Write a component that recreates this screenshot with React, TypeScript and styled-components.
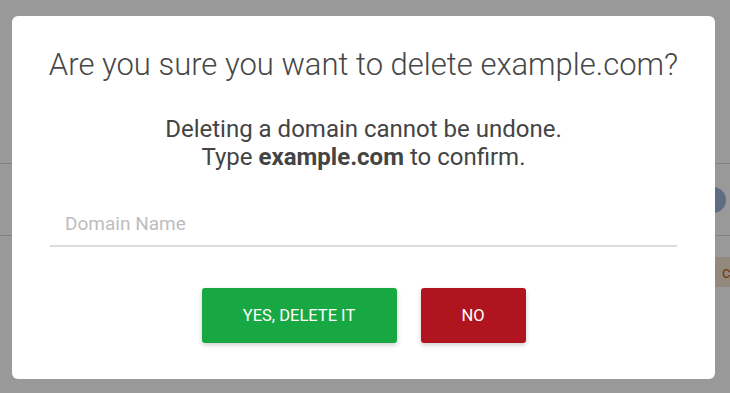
import React from 'react'
import styled, { createGlobalStyle } from 'styled-components'

const Global = createGlobalStyle`
  html, body {
    margin: 0;
    padding: 0;
    height: 100%;
    overflow: hidden;
    font-family: Roboto, "Liberation Sans", Arial, sans-serif;
    background: #fff;
  }
`

// page that sits behind the dialog
const Page = styled.div`
  width: 100vw;
  height: 100vh;
  overflow: hidden;
  display: flex;
  justify-content: center;
`

const Table = styled.div`
  flex: 0 0 880px;
  display: flex;
  flex-direction: column;
`

const Row = styled.div<{ $h: number; $line?: boolean; $pad?: number }>`
  flex: 0 0 ${p => p.$h}px;
  box-sizing: border-box;
  padding-top: ${p => p.$pad || 0}px;
  border-bottom: ${p => (p.$line ? '1px solid #d6d6d6' : 'none')};
  display: grid;
  grid-template-columns: 75px 1fr 105px;
  align-items: ${p => (p.$pad ? 'start' : 'center')};
`

const Cell = styled.div<{ $color?: string }>`
  text-align: right;
  font-size: 18px;
  line-height: 22px;
  color: ${p => p.$color || '#333'};
  white-space: nowrap;
`

const Avatar = styled.div`
  grid-column: 3;
  width: 26px;
  height: 26px;
  border-radius: 50%;
  background: #9fb4d8;
`

const Badge = styled.div`
  grid-column: 3;
  height: 30px;
  padding-left: 22px;
  display: flex;
  align-items: center;
  background: #f6e3d3;
  color: #c06a10;
  font-size: 16px;
`

const Overlay = styled.div`
  position: fixed;
  inset: 0;
  background: rgba(0, 0, 0, 0.4);
  display: flex;
  align-items: flex-start;
  padding: 16px 0 0 12px;
`

const Modal = styled.div`
  width: 703px;
  height: 363px;
  box-sizing: border-box;
  background: #fff;
  border-radius: 6px;
  padding: 30px 38px 36px;
  display: flex;
  flex-direction: column;
  align-items: center;
`

const Title = styled.h2`
  margin: 0;
  font-size: 31px;
  line-height: 37px;
  font-weight: 300;
  color: #474747;
  white-space: nowrap;
`

const Message = styled.p`
  margin: 32px 0 0;
  font-size: 24px;
  line-height: 28px;
  font-weight: 400;
  color: #444;
  text-align: center;
  b { font-weight: 700; }
`

const Field = styled.input`
  margin-top: 29px;
  width: 100%;
  height: 47px;
  box-sizing: border-box;
  border: none;
  border-bottom: 2px solid #dcdcdc;
  outline: none;
  padding: 2px 15px 0;
  font-family: inherit;
  font-size: 19px;
  color: #333;
  &::placeholder { color: #bdbdbd; }
`

const Actions = styled.div`
  margin-top: 41px;
  display: flex;
  gap: 24px;
`

const Button = styled.button<{ $bg: string; $w: number }>`
  width: ${p => p.$w}px;
  height: 55px;
  border: none;
  border-radius: 3px;
  background: ${p => p.$bg};
  color: #fff;
  font-family: inherit;
  font-size: 16.5px;
  font-weight: 400;
  text-transform: uppercase;
  box-shadow: 0 2px 5px rgba(0, 0, 0, 0.2);
  cursor: pointer;
`

const App = () => {
  return (
    <>
      <Global />
      <Page>
        <Table>
          <Row $h={164} $line $pad={51}><Cell>Content</Cell></Row>
          <Row $h={72} $line><Cell $color="#1a4f8a">domain</Cell><Avatar /></Row>
          <Row $h={72}><Cell /><Badge>cancelled</Badge></Row>
          <Row $h={128}><Cell>Info</Cell></Row>
        </Table>
      </Page>
      <Overlay>
        <Modal>
          <Title>Are you sure you want to delete example.com?</Title>
          <Message>
            Deleting a domain cannot be undone.<br />
            Type <b>example.com</b> to confirm.
          </Message>
          <Field placeholder="Domain Name" />
          <Actions>
            <Button $bg="#17a843" $w={195}>Yes, delete it</Button>
            <Button $bg="#b0141f" $w={105}>No</Button>
          </Actions>
        </Modal>
      </Overlay>
    </>
  )
}

export default App
